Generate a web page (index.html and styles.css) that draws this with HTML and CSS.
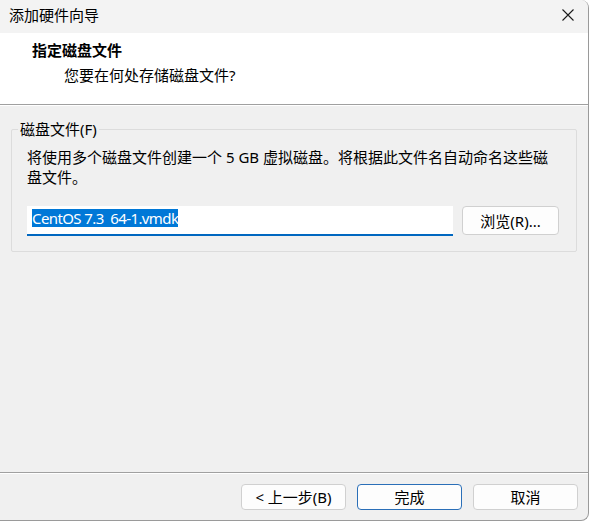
FILE: index.html
```html
<!DOCTYPE html>
<html lang="zh-CN">
<head>
<meta charset="utf-8">
<title>添加硬件向导</title>
<link rel="stylesheet" href="styles.css">
</head>
<body>
<div class="window">
  <div class="titlebar">
    <span class="title">添加硬件向导</span>
    <svg class="close" width="12" height="12" viewBox="0 0 12 12"><path d="M0.5 0.5 L11.5 11.5 M11.5 0.5 L0.5 11.5" stroke="#1b1b1b" stroke-width="1.1" fill="none"/></svg>
  </div>
  <div class="header">
    <div class="h-title">指定磁盘文件</div>
    <div class="h-sub">您要在何处存储磁盘文件?</div>
  </div>
  <div class="content">
    <div class="group">
      <span class="legend">磁盘文件(F)</span>
      <p class="desc">将使用多个磁盘文件创建一个 5 GB 虚拟磁盘。将根据此文件名自动命名这些磁盘文件。</p>
      <div class="file-row">
        <div class="input"><span class="sel">CentOS 7.3&nbsp;&nbsp;64-1.vmdk</span></div>
        <button class="btn browse">浏览(R)...</button>
      </div>
    </div>
  </div>
  <div class="footer">
    <button class="btn">&lt; 上一步(B)</button>
    <button class="btn primary">完成</button>
    <button class="btn">取消</button>
  </div>
</div>
</body>
</html>
```
FILE: styles.css
```css
html, body {
  margin: 0;
  padding: 0;
  background: #ffffff;
}
body {
  font-family: "Noto Sans", "Noto Sans CJK SC", sans-serif;
  font-size: 15px;
  color: #000;
}
.window {
  width: 588px;
  height: 520px;
  background: #f0f0f0;
  border-right: 1px solid #9a9a9a;
  border-bottom: 1px solid #9a9a9a;
  border-radius: 0 8px 8px 0;
  display: flex;
  flex-direction: column;
  overflow: hidden;
}
.titlebar {
  height: 33px;
  flex: none;
  background: #f3f3f3;
  display: flex;
  align-items: center;
  justify-content: space-between;
  padding: 0 14px 0 9px;
}
.title {
  line-height: 20px;
  padding-bottom: 3px;
  font-family: "Noto Sans CJK SC", sans-serif;
}
.close {
  display: block;
  margin-bottom: 3px;
}
.header {
  flex: none;
  height: 72px;
  box-sizing: border-box;
  background: #ffffff;
  border-bottom: 1px solid #a0a0a0;
  box-shadow: 0 1px 0 #ffffff;
  padding-top: 7px;
}
.h-title {
  padding-left: 32px;
  font-weight: bold;
  line-height: 20px;
}
.h-sub {
  padding-left: 64px;
  margin-top: 5px;
  line-height: 20px;
}
.content {
  flex: 1;
  padding: 24px 11px 0 11px;
}
.group {
  position: relative;
  border: 1px solid #dcdcdc;
  border-radius: 2px;
  padding: 17px 17px 15px 15px;
}
.legend {
  position: absolute;
  top: -11px;
  left: 6px;
  padding: 0 2px;
  background: #f0f0f0;
  line-height: 20px;
}
.desc {
  margin: 0;
  line-height: 20px;
  padding-right: 4px;
}
.file-row {
  display: flex;
  margin-top: 19px;
  gap: 9px;
  align-items: flex-start;
}
.input {
  width: 426px;
  height: 30px;
  box-sizing: border-box;
  background: #ffffff;
  border-bottom: 2px solid #0067c0;
  padding: 3px 0 0 5px;
  line-height: 18px;
}
.sel {
  background: #0078d7;
  color: #ffffff;
  display: inline-block;
  line-height: 18px;
  letter-spacing: -0.6px;
}
.btn {
  font-family: "Noto Sans", "Noto Sans CJK SC", sans-serif;
  font-size: 15px;
  color: #000;
  background: #fdfdfd;
  border: 1px solid #d0d0d0;
  border-radius: 4px;
  padding: 0;
  margin: 0;
  width: 105px;
  height: 26px;
  line-height: 22px;
}
.browse {
  width: 97px;
  height: 29px;
}
.primary {
  border-color: #2a6fb8;
}
.footer {
  flex: none;
  border-top: 1px solid #a0a0a0;
  box-shadow: inset 0 1px 0 #ffffff;
  height: 48px;
  box-sizing: border-box;
  padding: 11px 10px 0 0;
  display: flex;
  justify-content: flex-end;
  gap: 11px;
}
```
